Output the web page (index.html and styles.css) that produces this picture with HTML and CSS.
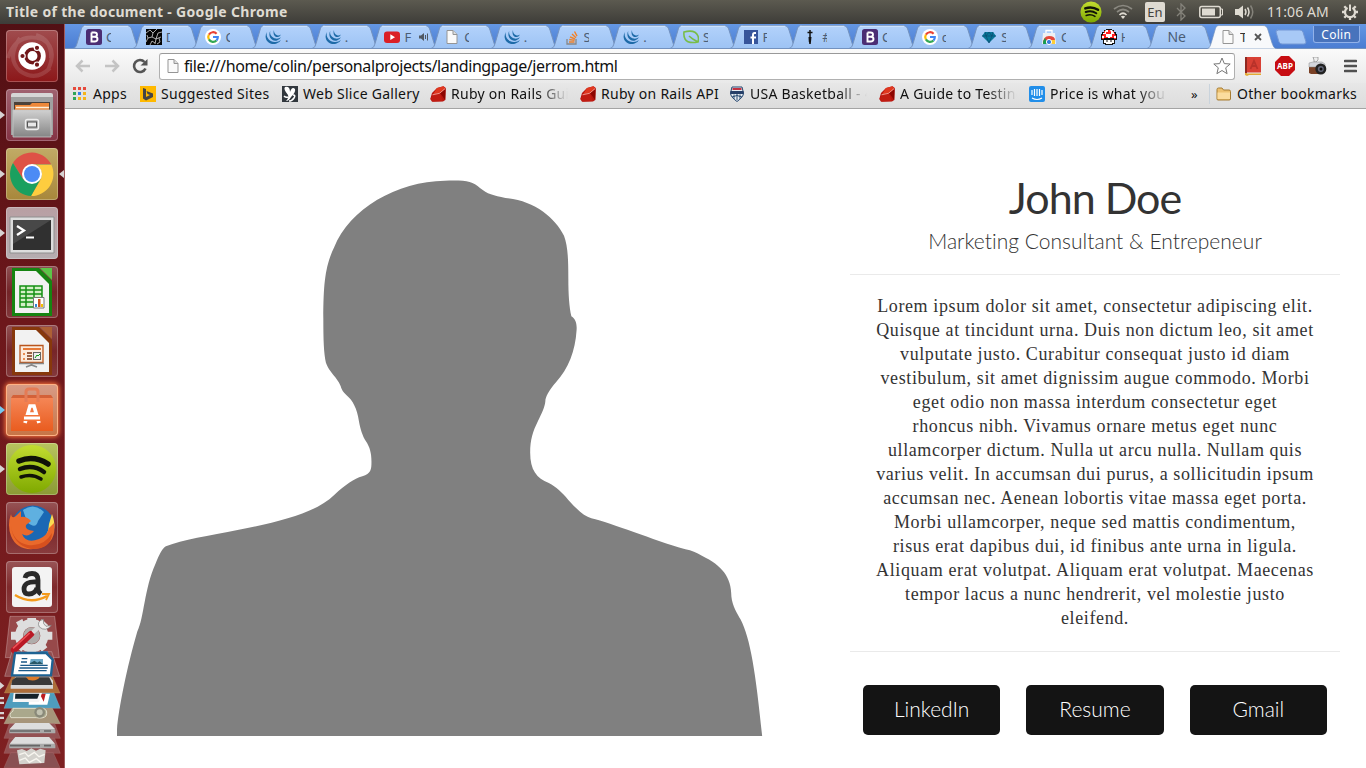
FILE: index.html
```html
<!DOCTYPE html>
<html lang="en">
<head>
<meta charset="utf-8">
<title>Title of the document</title>
<link rel="stylesheet" href="styles.css">
</head>
<body>
<svg class="defs" width="0" height="0">
  <defs>
    <linearGradient id="tabfill" x1="0" y1="0" x2="0" y2="1"><stop offset="0" stop-color="#b3d2fb"/><stop offset="1" stop-color="#9dc3f4"/></linearGradient>
    <linearGradient id="steel" x1="0" y1="0" x2="0" y2="1"><stop offset="0" stop-color="#d0d0d0"/><stop offset="1" stop-color="#858585"/></linearGradient>
    <linearGradient id="lime" x1="0" y1="0" x2="0" y2="1"><stop offset="0" stop-color="#c3dc31"/><stop offset="1" stop-color="#7fa900"/></linearGradient>
    <linearGradient id="bag" x1="0" y1="0" x2="0" y2="1"><stop offset="0" stop-color="#f58656"/><stop offset="1" stop-color="#e95c1f"/></linearGradient>
  </defs>
  <symbol id="tab" viewBox="0 0 70 25"><path d="M0 24.5C3 24 3.500 21 4.500 18L8 6C9 2.500 10 1.500 12.500 1.500H54C57 1.500 58 3 59 6L63 19C64.500 23 65 24 68 24.500Z" fill="url(#tabfill)" stroke="#7392bf"/><path d="M11 2.300H55" stroke="#d3e5fd"/></symbol>
  <symbol id="boot" viewBox="0 0 16 16"><rect width="16" height="16" rx="2.500" fill="#4b2d73"/><path d="M5.500 3.500H8.500Q11 3.500 11 5.700 11 7.500 8.500 7.700H5.500M8.500 7.700Q11.500 7.700 11.500 10 11.500 12.500 8.500 12.500H5.500V3.500" fill="none" stroke="#fff" stroke-width="1.900"/></symbol>
  <symbol id="goog" viewBox="0 0 16 16"><circle cx="8" cy="8" r="8" fill="#fff"/><g fill="none" stroke-width="2.200"><path d="M11.600 4.800A4.800 4.800 0 0 0 3.900 5.600" stroke="#ea4335"/><path d="M3.900 5.600A4.800 4.800 0 0 0 3.900 10.400" stroke="#fbbc05"/><path d="M3.900 10.400A4.800 4.800 0 0 0 11.500 11.400" stroke="#34a853"/><path d="M11.500 11.400A4.800 4.800 0 0 0 12.800 8H8" stroke="#4285f4"/></g></symbol>
  <symbol id="jq" viewBox="0 0 16 16"><g fill="#1e6ba8"><path d="M2 3C-2 9 3 16.500 11 14.800Q14.500 14 16 11Q13 13.500 9.500 13C4 12.500 .5 8 2 3Z"/><path d="M5.300 1.800C2.500 7 6.500 12.800 12 11.500Q14.500 11 16 8.300Q13.500 10 10.800 9.600C7 9 4.300 5.500 5.300 1.800Z"/><path d="M9 1C7.500 5 9.800 8.800 13 8Q15 7.500 16 5.500Q14 6.800 12.200 6.200C10 5.500 8.700 3.500 9 1Z"/></g></symbol>
  <symbol id="file" viewBox="0 0 16 16"><path d="M3 1.500H9L13 5.500V14.500H3Z" fill="#fafafa" stroke="#959595"/><path d="M9 1.500V5.500H13" fill="#ddd" stroke="#959595"/></symbol>
  <symbol id="ruby" viewBox="0 0 16 16"><path d="M2 7L7 2 13.500 .3 15.800 2 15.300 14 13 15.500 2 15.700 .3 13Z" fill="#b8130d"/><path d="M7 2L13.500 .3 15.300 2.500 10 7 3 8.500Z" fill="#e0371f"/><path d="M3 8.500L10 7.500 13 15 3 15.500 .5 13Z" fill="#c01c12"/><path d="M10 7L15.500 3 15.200 14Z" fill="#8c0500"/><path d="M2.500 8.800L9.500 7.300 15 2.700" stroke="#f9b0a4" fill="none" stroke-width=".8"/></symbol>
  <symbol id="folderic" viewBox="0 0 16 16"><path d="M1 3.500Q1 2 2.500 2H6L7.500 4H13Q14.500 4 14.500 5.500V13Q14.500 14 13 14H2Q1 14 1 13Z" fill="#edc171" stroke="#a77c32"/><path d="M1.500 6.500H14V13H1.500Z" fill="#fbdc9e"/></symbol>
  <symbol id="spot" viewBox="0 0 50 50"><circle cx="25" cy="25" r="24" fill="url(#lime)"/><g fill="none" stroke="#101208" stroke-linecap="round"><path d="M12 17Q27 11 41 20" stroke-width="5.500"/><path d="M13 25Q26 20 37 28" stroke-width="4.500"/><path d="M14 33Q25 29 34 35" stroke-width="3.500"/></g></symbol>
</svg>

<header class="panel">
  <div class="panel-title">Title of the document - Google Chrome</div>
  <div class="indicators">
    <svg width="24" height="24"><use href="#spot" x="1" y="1" width="22" height="22"/></svg>
    <svg class="wifi" width="20" height="16" viewBox="0 0 20 16"><g fill="none" stroke="#8b8981" stroke-width="1.700"><path d="M1 5Q10-2 19 5M4 8Q10 3 16 8"/><path d="M6.500 11Q10 7.500 13.500 11" stroke="#dfdbd2"/></g><path d="M7.800 12.500L10 15 12.200 12.500Q10 11 7.800 12.500" fill="#dfdbd2"/></svg>
    <span class="lang">En</span>
    <svg class="bt" width="10" height="18" viewBox="0 0 10 18"><path d="M1 5L9 13 5 17V1L9 5 1 13" fill="none" stroke="#85837b" stroke-width="1.300"/></svg>
    <svg class="batt" width="25" height="14" viewBox="0 0 25 14"><rect x=".8" y="1.500" width="20.500" height="11" rx="2" fill="none" stroke="#dfdbd2" stroke-width="1.500"/><path d="M3 3.500H16V10.500H3Z" fill="#dfdbd2"/><path d="M22 4H23.500V10H22" fill="none" stroke="#dfdbd2"/></svg>
    <svg class="vol" width="20" height="16" viewBox="0 0 20 16"><path d="M0 5H3.500L8 1.500V14.500L3.500 11H0Z" fill="#dfdbd2"/><path d="M10 5Q12 8 10 11M12.500 3.500Q15.500 8 12.500 12.500" fill="none" stroke="#dfdbd2" stroke-width="1.500"/><path d="M15.500 1.500Q20 8 15.500 14.500" fill="none" stroke="#85837b" stroke-width="1.500"/></svg>
    <span class="clock">11:06 AM</span>
    <svg class="gear" width="18" height="18" viewBox="0 0 18 18"><g stroke="#dfdbd2" fill="none"><path d="M6.500 4.800A5 5 0 1 0 11.500 4.800" stroke-width="2.200"/><path d="M9 1.500V8" stroke-width="2"/><path d="M1 9H4M14 9H17M3.300 14.700L5.200 12.800M14.700 14.700L12.800 12.800M9 14.500V17M3.300 3.300L5 5M14.700 3.300L13 5" stroke-width="2.300"/></g></svg>
  </div>
</header>

<div class="desktop">
  <nav class="launcher">
    <div class="tile dash"><svg viewBox="0 0 52 52"><g fill="none" stroke="#fff" stroke-opacity=".13" stroke-width="4"><path d="M2 28Q10 2 36 9Q52 18 42 40M14 8Q0 28 14 41Q30 52 44 38M30 5Q46 10 45 28"/></g><circle cx="26" cy="26" r="13.700" fill="#fff"/><circle cx="26.500" cy="26" r="6.700" fill="none" stroke="#701719" stroke-width="3.500"/><g fill="#701719" stroke="#fff" stroke-width="1.200"><circle cx="16.500" cy="26" r="2.700"/><circle cx="31" cy="17.800" r="2.700"/><circle cx="31" cy="34.700" r="2.700"/></g></svg></div>
    <div class="tile files run"><svg viewBox="0 0 52 52"><path d="M5 6Q5 4 7 4H45Q47 4 47 6V20H5Z" fill="#d6d6d6"/><path d="M5 8H47V46H5Z" fill="#a0a0a0"/><path d="M8 13H44V23H8Z" fill="#4c4139"/><path d="M9 16H24L26 14H43V24H9Z" fill="#ee8839"/><path d="M10 18.500H43" stroke="#fff0d9" stroke-width="1.500"/><path d="M7 21H45V48H7Z" fill="url(#steel)" stroke="#c7c7c7" stroke-width=".8"/><rect x="19.500" y="30.500" width="13" height="10" rx="2" fill="#aaa" stroke="#eee" stroke-width="1.400"/><rect x="21.500" y="33" width="9" height="5" fill="#e8e8e8" stroke="#555"/></svg></div>
    <div class="tile chrome run focused"><svg viewBox="0 0 52 52"><path d="M7 15A22 22 0 0 1 45 16H26L17 31Z" fill="#de5246"/><path d="M45 16A22 22 0 0 1 25 48L35 31Q38 23 31 17H45Z" fill="#fecd3f"/><path d="M25 48A22 22 0 0 1 7 15L17 31Q23 38 34 32Z" fill="#1aa05f"/><circle cx="26" cy="26" r="10" fill="#fff"/><circle cx="26" cy="26" r="8" fill="#4c8bf5"/></svg></div>
    <div class="tile term run"><svg viewBox="0 0 52 52"><path d="M4 10H48V46H4Z" fill="#ddd" stroke="#8f8f8f"/><path d="M7 13H45V43H7Z" fill="#303030"/><path d="M7 13H45L7 37Z" fill="#484848"/><path d="M11 19L18 23.500 11 28" fill="none" stroke="#fff" stroke-width="2.300"/><path d="M20 30.500H28" stroke="#fff" stroke-width="2"/></svg></div>
    <div class="tile"><svg viewBox="0 0 52 52"><path d="M6 2H33L46 15V50H6Z" fill="#168411"/><path d="M34 2H46V14Z" fill="#5cc548"/><path d="M9 5H30L43 18V47H9Z" fill="#f2f2f2"/><path d="M14 20H36V41H14Z" fill="#d4f0c7"/><path d="M14 20H36V41H14ZM14 24H36M14 28H36M14 32H36M14 36H36M20 20V41M28 20V41" fill="none" stroke="#159014" stroke-width="1.500"/><path d="M27.500 31.500H38V42H27.500Z" fill="#fff" stroke="#777"/><path d="M29 38H31V41H29Z" fill="#3586cf"/><path d="M32 33H34.500V41H32Z" fill="#d2551c"/><path d="M35 38H37V41H35Z" fill="#f5bf00"/></svg></div>
    <div class="tile"><svg viewBox="0 0 52 52"><path d="M6 2H33L46 15V50H6Z" fill="#87380c"/><path d="M34 2H46V14Z" fill="#ad6035"/><path d="M9 5H30L43 18V47H9Z" fill="#f2f2f2"/><path d="M14 20.500H37V37.500H14Z" fill="#fcebdc" stroke="#b9551d" stroke-width="1.300"/><path d="M17 24H35" stroke="#e67937" stroke-width="2"/><path d="M17 29H19M17 34H19" stroke="#e88b50" stroke-width="2.200"/><path d="M21 28H26M21 31H26M21 34H26" stroke="#7a3511" stroke-width="1.400"/><rect x="27.500" y="27.500" width="7" height="7" fill="#eee" stroke="#666"/><path d="M29 33L31 30 32 31 34 29" fill="none" stroke="#0b9a12"/><path d="M13 38.500H38M25.500 38V40L20 42M25.500 40L31 42" stroke="#888" stroke-width="1.700" fill="none"/></svg></div>
    <div class="tile store run blue"><svg viewBox="0 0 52 52"><path d="M5 14H47V47H5Z" fill="url(#bag)"/><path d="M7 11H45L47 14H5Z" fill="#d46138"/><path d="M20 18V8Q20 5 23 5H29Q32 5 32 8V18" fill="none" stroke="#e47b55" stroke-width="3"/><path d="M19 39L24 22H28L33 39M21 30H31" fill="none" stroke="#fff" stroke-width="3.600"/><path d="M17 34H35" stroke="#f37237" stroke-width="6"/><path d="M18 34H34" stroke="#fff" stroke-width="3"/></svg></div>
    <div class="tile spotify run"><svg viewBox="0 0 52 52"><use href="#spot" x="1" y="1" width="50" height="50"/></svg></div>
    <div class="tile"><svg viewBox="0 0 52 52"><circle cx="27" cy="25" r="21.500" fill="#1a68b4"/><path d="M17 8Q28 0 38 10L32 19Q30 28 21 20Z" fill="#5fb0e0"/><path d="M46 12Q52 28 43 35Q39 42 31 45Q43 34 43 22Z" fill="#fbdc51"/><path d="M5 12Q6 18 11 13L15 9 15 15Q20 14 25 19L20 23Q18 28 28 29Q22 36 16 32Q20 42 33 37Q41 34 43 26L48 21Q51 40 34 46Q12 51 5 34Q1 23 5 12Z" fill="#e9692b"/><path d="M5 24Q7 40 22 43Q38 45 46 31Q45 48 25 47Q7 43 5 24Z" fill="#d6501e"/></svg></div>
    <div class="tile"><svg viewBox="0 0 52 52"><rect x="6" y="6" width="40" height="40" rx="3" fill="#f3f3f3"/><path d="M19 17Q20 12.500 26 12.500Q32 12.500 32 19V28Q32 31 35 33M31 21Q18 20 18 28Q18 33 23 33Q29 33 31 27" fill="none" stroke="#292929" stroke-width="4.800"/><path d="M9 34Q25 44 41 35" fill="none" stroke="#f49a1b" stroke-width="2.300"/><path d="M36 33L43 33 40 39" fill="none" stroke="#f49a1b" stroke-width="1.800"/></svg></div>
    <svg class="stack" width="65" height="153" viewBox="0 360 195 459">
      <g stroke="#fff" stroke-opacity=".4" stroke-width="2">
        <path d="M30 364H164L178 488H16Z" fill="#97494a"/>
        <path d="M36 470H155L179 544H14Z" fill="#914c4e"/>
      </g>
      <g transform="translate(95 422)"><circle r="38" fill="none" stroke="#dedede" stroke-width="24"/><path d="M-13-53H13V-35H-13ZM-13 35H13V52H-13ZM-62-12H-40V12H-62ZM40-12H62V12H40ZM-47-40L-28-50-20-30-35-18ZM30-50L50-31 38-15 20-28ZM-47 35L-30 48-20 30-35 18ZM47 35L30 48 20 30 35 18Z" fill="#dedede"/><circle r="25" fill="#b0adab"/><path d="M-53 43L-2-5" stroke="#b91925" stroke-width="19" stroke-linecap="round"/><path d="M-56 38L-6-8" stroke="#ed5256" stroke-width="5"/><path d="M3-10L31-34" stroke="#dadada" stroke-width="13"/><path d="M35-49Q14-43 23-26Q42-10 59-31L43-28 36-36Z" fill="#eee" stroke="#777" stroke-width="2"/></g>
      <path d="M36 545H158L180 594H13Z" fill="#ac6d39" stroke="#c99861"/><path d="M38 557L47 545H150L159 557V581H32V572Z" fill="#d7d7d7"/><path d="M37 555L48 547H148L158 570H34Z" fill="#393939"/><path d="M77 545H119Q112 560 86 555Z" fill="#dc7b2a"/>
      <path d="M120 469H143L148 484H126Z" fill="#2879b7"/>
      <path d="M45 474H138L158 494 153 541H36Z" fill="#fff" stroke="#1d6292" stroke-width="7"/><path d="M65 491H82M63 501H81M61 511H143M58 519H143M55 527H140" stroke="#1b5988" stroke-width="4"/><path d="M92 492H129V508H89Z" fill="#6ca8c7"/><path d="M90 505L103 497 112 503 119 499 130 508H89Z" fill="#295867"/>
      <path d="M31 594H162L181 640H12Z" fill="#4e9dbd" stroke="#87bfd3"/><path d="M88 596H150L142 629H86Z" fill="#fff"/><path d="M119 596H137L131 620Z" fill="#bd1c20"/><path d="M41 594H126L117 621H38Z" fill="#f6f6f6"/><path d="M46 596H118L112 611H45Z" fill="#152128"/>
      <path d="M36 640H157L181 686H12Z" fill="#a7957a" stroke="#cabca8"/><path d="M39 640H130Q145 645 138 663Q129 672 109 668H33Q25 657 39 648Z" fill="#aaa88c" stroke="#dfddca" stroke-width="3"/><circle cx="119" cy="652" r="16" fill="#898979"/><circle cx="119" cy="652" r="9" fill="#c2c2b0"/>
      <path d="M28 686H164L181 730H12Z" fill="#935153" stroke="#b77979"/><path d="M46 684H147L166 705V715H28V704Z" fill="#aaa"/><path d="M46 684H147L165 702H29Z" fill="#ddd"/><path d="M30 708H120M132 708H153" stroke="#666" stroke-width="5"/>
      <path d="M28 730H164L181 775H12Z" fill="#935153" stroke="#b77979"/><path d="M46 726H147L166 749V760H28V749Z" fill="#aaa"/><path d="M46 726H147L165 746H29Z" fill="#ddd"/><path d="M30 752H120M132 752H153" stroke="#666" stroke-width="5"/>
      <path d="M32 773H160L180 818H12Z" fill="#895052" stroke="#b77979"/><path d="M51 766L66 762 80 768 94 760 108 767 121 761 137 766 133 804 58 808Z" fill="#d4d2cd"/><path d="M58 779L75 773 85 784 103 772 117 785 134 778M58 796L76 789 88 802 109 791 124 803" fill="none" stroke="#f8f6f0" stroke-width="4"/>
      <path d="M0 561L13 572 0 583ZM0 606H12V613H0ZM0 620H12V627H0ZM0 651H12V658H0ZM0 665H12V672H0Z" fill="#d8d4d4"/>
    </svg>
  </nav>

  <main class="browser">
    <div class="tabs">
      <div class="tab"><svg class="shape"><use href="#tab"/></svg><svg class="ico"><use href="#boot"/></svg><span class="half">C</span></div>
      <div class="tab"><svg class="shape"><use href="#tab"/></svg><svg class="ico" viewBox="0 0 16 16"><path d="M0 0H16V16H0Z" fill="#050505"/><path d="M0 4L4 1 7 4 11 0M7 4L6 8 2 9 0 13M6 8L10 10 9 15M10 10L15 8M10 10L12 4 16 3M2 9L1 6M4 16L6 12 9 14M13 9L14 13 11 15" fill="none" stroke="#d4d4d4" stroke-width=".8"/></svg><span class="half d">D</span></div>
      <div class="tab"><svg class="shape"><use href="#tab"/></svg><svg class="ico"><use href="#goog"/></svg><span class="half">C</span></div>
      <div class="tab"><svg class="shape"><use href="#tab"/></svg><svg class="ico"><use href="#jq"/></svg><span>.</span></div>
      <div class="tab"><svg class="shape"><use href="#tab"/></svg><svg class="ico"><use href="#jq"/></svg><span>.</span></div>
      <div class="tab"><svg class="shape"><use href="#tab"/></svg><svg class="ico" viewBox="0 0 16 16"><rect y="2.500" width="16" height="11.500" rx="3" fill="#db1f26"/><path d="M6.300 5.300L11 8.200 6.300 11Z" fill="#fff"/></svg><span>F</span><svg class="sound" width="10" height="10" viewBox="0 0 10 10"><path d="M0 3.500H2L5 1V9L2 6.500H0Z" fill="#505863"/><path d="M6.500 3V7M8.500 1.500V8.500" stroke="#505863" stroke-width="1"/></svg></div>
      <div class="tab"><svg class="shape"><use href="#tab"/></svg><svg class="ico"><use href="#file"/></svg><span class="half">C</span></div>
      <div class="tab"><svg class="shape"><use href="#tab"/></svg><svg class="ico"><use href="#jq"/></svg><span>.</span></div>
      <div class="tab"><svg class="shape"><use href="#tab"/></svg><svg class="ico" viewBox="0 0 16 16"><path d="M3 10V15H12V10" fill="none" stroke="#888" stroke-width="1.300"/><path d="M5 13H10.500M5.200 10.500L10.600 11.400M6 7.800L11 10M8 5L12 8.700M10.500 2.500L13 7.200" stroke="#f48024" stroke-width="1.400"/></svg><span class="half">S</span></div>
      <div class="tab"><svg class="shape"><use href="#tab"/></svg><svg class="ico"><use href="#jq"/></svg><span>.</span></div>
      <div class="tab"><svg class="shape"><use href="#tab"/></svg><svg class="ico" viewBox="0 0 16 16"><path d="M1 3Q12 0 15 7Q16 10 15 13Q5 15 2 10Q.5 7 1 3ZM6 7Q9 10 15 13" fill="none" stroke="#78bd48" stroke-width="1.600"/></svg><span class="half">S</span></div>
      <div class="tab"><svg class="shape"><use href="#tab"/></svg><svg class="ico" viewBox="0 0 16 16"><path d="M1 1H15V15H1Z" fill="#37559b"/><path d="M13 4H11.500Q10 4 10 6V15M7.500 8.500H13" fill="none" stroke="#fff" stroke-width="2"/></svg><span class="half d">F</span></div>
      <div class="tab"><svg class="shape"><use href="#tab"/></svg><svg class="ico" viewBox="0 0 16 16"><path d="M8 1V15M5.500 3.500H10.500" stroke="#111" stroke-width="1.500"/><path d="M6.500 8H9.500L9 12.500 8 15 6.800 12.500Z" fill="#111"/></svg><span class="half">#</span></div>
      <div class="tab"><svg class="shape"><use href="#tab"/></svg><svg class="ico"><use href="#boot"/></svg><span class="half">C</span></div>
      <div class="tab"><svg class="shape"><use href="#tab"/></svg><svg class="ico"><use href="#goog"/></svg><span class="half c">c</span></div>
      <div class="tab"><svg class="shape"><use href="#tab"/></svg><svg class="ico" viewBox="0 0 16 16"><path d="M4 3H12L15 7 8 14 1 7Z" fill="#087798"/><path d="M4 3L5 7 8 3 11 7 12 3M1 7H15M5 7L8 14 11 7" stroke="#0b4b70" stroke-width=".7" fill="none"/></svg><span class="half">S</span></div>
      <div class="tab"><svg class="shape"><use href="#tab"/></svg><svg class="ico" viewBox="0 0 16 16"><path d="M2 4H14L15 15H1Z" fill="#eef0f2"/><path d="M5 4V1.500H11V4" fill="none" stroke="#fff" stroke-width="1.300"/><path d="M2 15Q2 7 8 7Q14 7 14 11H8Z" fill="#e4473b"/><path d="M2 15Q2 11 4 9L7 15Z" fill="#179c50"/><path d="M9 11H14V15H9Z" fill="#ffcd37"/><circle cx="8" cy="13" r="2.600" fill="#367bdd" stroke="#fff"/></svg><span class="half">C</span></div>
      <div class="tab"><svg class="shape"><use href="#tab"/></svg><svg class="ico" viewBox="0 0 16 16"><path d="M5 0H11V1H13V3H15V5H16V11H14V15H12V16H4V15H2V11H0V5H1V3H3V1H5Z" fill="#111"/><path d="M5 1H11V2H13V4H14V6H15V10H13V9H3V10H1V6H2V4H3V2H5Z" fill="#f22"/><path d="M5 1H7V3H5V5H2V4H4V2ZM9 1H11L13 4V5H10V3ZM5 5H11V8H9V9H7V8H5ZM1 7H3V9H1ZM13 7H15V9H13ZM3 11H13V14H11V15H5V14H3Z" fill="#fff"/><path d="M6 11V13M10 11V13" stroke="#111"/></svg><span class="half d">H</span></div>
      <div class="tab plain"><svg class="shape"><use href="#tab"/></svg><span>Ne</span></div>
      <div class="tab active"><svg class="shape" viewBox="0 0 70 25"><path d="M0 25C3 24 3.500 21 4.500 18L8 6C9 2.500 10 1.500 12.500 1.500H56C59 1.500 60 3 61 6L65 19C66.500 23 67 24 70 25Z" fill="#f8f9fb" stroke="#7392bf" stroke-width=".7"/></svg><svg class="ico"><use href="#file"/></svg><span class="half">T</span><svg class="close" width="8" height="8" viewBox="0 0 8 8"><path d="M1 1L7 7M7 1L1 7" stroke="#555" stroke-width="1.800"/></svg></div>
      <svg class="newtab" width="32" height="16" viewBox="0 0 32 16"><path d="M2 1H25Q27 1 28 3L31 13Q31 15 29 15H7Q5 15 4 13L1 3Q1 1 3 1Z" fill="#a8c9f6" stroke="#7498d5"/></svg>
      <div class="user">Colin</div>
    </div>

    <div class="toolbar">
      <svg class="nav" width="16" height="14" viewBox="0 0 16 14"><path d="M15 7H2M7.500 1.500L2 7 7.500 12.500" fill="none" stroke="#c4c4c4" stroke-width="2.500"/></svg>
      <svg class="nav" width="16" height="14" viewBox="0 0 16 14"><path d="M1 7H14M8.500 1.500L14 7 8.500 12.500" fill="none" stroke="#c4c4c4" stroke-width="2.500"/></svg>
      <svg class="reload" width="16" height="16" viewBox="0 0 16 16"><path d="M12.500 4A6 6 0 1 0 13.500 10.500" fill="none" stroke="#555" stroke-width="2.600"/><path d="M15.500 1V7.500H8.500Z" fill="#555"/></svg>
      <div class="omnibox"><svg width="16" height="18"><use href="#file"/></svg><span>file:///home/colin/personalprojects/landingpage/jerrom.html</span><svg class="star" width="18" height="18" viewBox="0 0 18 18"><path d="M9 1L11.300 6.600 17.200 7 12.700 10.800 14.100 16.700 9 13.500 3.900 16.700 5.300 10.800 .8 7 6.700 6.600Z" fill="#fff" stroke="#777"/></svg></div>
      <svg class="ext" width="17" height="19" viewBox="0 0 17 19"><path d="M1 0H17V16H1Z" fill="#d84034"/><path d="M1 0H3V18H1Z" fill="#8f2820"/><path d="M1 16H17V18H5L3 19 1 18Z" fill="#e3aa35"/><path d="M3 16H17" stroke="#eee"/><path d="M6.500 12L10 4 13.500 12M7.500 9H12.500" stroke="#b8322a" stroke-width="1.800" fill="none"/></svg>
      <div class="abp">ABP</div>
      <svg class="cam" width="19" height="19" viewBox="0 0 19 19"><path d="M5 0H10V3L8 5H6V3Z" fill="#eee" stroke="#888" stroke-width=".7"/><path d="M1 7H15V17H3L1 16Z" fill="#7a4126"/><path d="M1 6L5 5H14L17 7V10H1Z" fill="#d4d6dc" stroke="#888" stroke-width=".5"/><circle cx="12.800" cy="12" r="5.500" fill="#232323"/><circle cx="12.800" cy="12" r="3" fill="#65697a"/><circle cx="13" cy="12" r="1.500" fill="#111"/></svg>
      <svg class="menu" width="13" height="14" viewBox="0 0 13 14"><path d="M1 2H12M1 7H12M1 12H12" stroke="#505050" stroke-width="2.700" stroke-linecap="round"/></svg>
    </div>

    <div class="bookmarks">
      <div class="bm w68"><svg class="ico" viewBox="0 0 16 16"><path d="M1 1H4V4H1ZM6 1H9V4H6ZM11 1H14V4H11Z" fill="#e64a3c"/><path d="M1 6H4V9H1Z" fill="#2da456"/><path d="M6 6H9V9H6Z" fill="#347ee8"/><path d="M11 6H14V9H11ZM6 11H9V14H6ZM11 11H14V14H11Z" fill="#f4b41a"/><path d="M1 11H4V14H1Z" fill="#2da456"/></svg><span>Apps</span></div>
      <div class="bm w142"><svg class="ico" viewBox="0 0 16 16"><path d="M0 0H16V16H0Z" fill="#ffb900"/><path d="M3 2L6 3V11L10 9 7.500 8 6.500 5 13 7.500V11L6 14.500 3 12.500Z" fill="#454545"/></svg><span>Suggested Sites</span></div>
      <div class="bm w148"><svg class="ico" viewBox="0 0 16 16"><path d="M0 0H16V16H0Z" fill="#31373d"/><path d="M3 1Q8 0 8 6Q10 0 13 3Q14 6 9 11Q7 15 4 15Q7 12 6 9Q1 3 3 1Z" fill="#fff"/><path d="M2 10Q4 12 6 11M11 9Q14 9 12 12Q10 15 7 15" fill="none" stroke="#fff" stroke-width="1.500"/></svg><span>Web Slice Gallery</span></div>
      <div class="bm w150"><svg class="ico"><use href="#ruby"/></svg><span class="fade">Ruby on Rails Guides</span></div>
      <div class="bm w149"><svg class="ico"><use href="#ruby"/></svg><span>Ruby on Rails API</span></div>
      <div class="bm w150 usa"><svg class="ico" viewBox="0 0 16 16"><path d="M3 1H13L14.500 7Q14.500 11 8 15.500Q1.500 11 1.500 7Z" fill="#e8edf2" stroke="#24456e"/><path d="M1.500 5H14.500V8H1.500Z" fill="#263f68"/><path d="M3.500 3H12.500" stroke="#c23242" stroke-width="2"/><path d="M3 11Q8 8 13 11M8 8V14M5 8.500V13M11 8.500V13" stroke="#2b4c72" stroke-width="1" fill="none"/></svg><span class="fade">USA Basketball - 404</span></div>
      <div class="bm w150"><svg class="ico"><use href="#ruby"/></svg><span class="fade">A Guide to Testing R</span></div>
      <div class="bm w150 price"><svg class="ico" viewBox="0 0 16 16"><rect width="16" height="16" rx="2" fill="#218ee9"/><path d="M3 4V9M5.500 3V10M8 3V10M10.500 3V10M13 4V9M3 12Q8 15 13 12" stroke="#fff" stroke-width="1.200" fill="none"/></svg><span class="fade">Price is what you pay</span></div>
      <div class="more">»</div>
      <div class="bm other"><svg class="ico"><use href="#folderic"/></svg><span>Other bookmarks</span></div>
    </div>

    <div class="page">
      <svg class="portrait" width="646" height="557" viewBox="39.200 52.300 1489.700 1455" preserveAspectRatio="none"><path d="M39 1505V1490C42 1440 62 1325 86 1232C102 1195 102 1120 128 1055C137 1028 145 1013 152 1009C190 992 250 982 320 966C420 944 500 920 540 875C568 846 585 833 605 826C625 819 626 808 626 788C626 765 622 750 614 736C605 722 600 700 597 682C593 650 583 628 568 614C552 597 560 595 547 575C535 555 527 550 521 530C516 505 515 470 515 415C515 320 520 275 540 228C575 128 685 55 795 54C845 53 857 54 877 74C892 88 908 94 935 99C1000 105 1050 150 1070 198C1079 225 1080 260 1080 310C1080 350 1082 385 1087 408C1098 416 1100 430 1099 445C1096 500 1080 545 1052 580C1035 602 1027 620 1027 630C1026 645 1018 663 1010 682C998 710 992 730 992 765C992 810 1007 832 1035 844C1052 854 1065 868 1080 888C1100 913 1117 931 1133 936C1180 948 1275 993 1350 1017C1365 1020 1375 1026 1388 1034C1435 1060 1456 1090 1456 1140C1458 1165 1470 1185 1477 1200C1500 1250 1512 1340 1527 1505Z" fill="#808080"/></svg>
      <section class="bio">
        <h1>John Doe</h1>
        <h2>Marketing Consultant &amp; Entrepeneur</h2>
        <hr>
        <p>Lorem ipsum dolor sit amet, consectetur adipiscing elit.<br>Quisque at tincidunt urna. Duis non dictum leo, sit amet<br>vulputate justo. Curabitur consequat justo id diam<br>vestibulum, sit amet dignissim augue commodo. Morbi<br>eget odio non massa interdum consectetur eget<br>rhoncus nibh. Vivamus ornare metus eget nunc<br>ullamcorper dictum. Nulla ut arcu nulla. Nullam quis<br>varius velit. In accumsan dui purus, a sollicitudin ipsum<br>accumsan nec. Aenean lobortis vitae massa eget porta.<br>Morbi ullamcorper, neque sed mattis condimentum,<br>risus erat dapibus dui, id finibus ante urna in ligula.<br>Aliquam erat volutpat. Aliquam erat volutpat. Maecenas<br>tempor lacus a nunc hendrerit, vel molestie justo<br>eleifend.</p>
        <hr>
        <div class="links"><a>LinkedIn</a><a>Resume</a><a>Gmail</a></div>
      </section>
    </div>
  </main>
</div>
</body>
</html>
```
FILE: styles.css
```css
* { box-sizing: border-box; }
body { margin: 0; width: 1366px; height: 768px; overflow: hidden; background: #fff; font-family: "Noto Sans", "Open Sans", sans-serif; }
svg { display: block; flex: none; }
.defs { position: absolute; }

.panel { height: 24px; display: flex; justify-content: space-between; align-items: center; padding-left: 6px; background: linear-gradient(#5c5a50, #3d3c38); color: #dfdbd2; }
.panel-title { font-size: 14px; font-weight: 700; line-height: 24px; white-space: nowrap; letter-spacing: .32px; }
.indicators { display: flex; align-items: center; width: 287px; height: 24px; }
.wifi { margin-left: 10px; }
.lang { margin-left: 12px; width: 20px; height: 20px; border-radius: 2px; background: #dfdbd2; color: #44433e; font-size: 13px; line-height: 21px; text-align: center; }
.bt { margin-left: 11px; }
.batt { margin-left: 13px; }
.vol { margin-left: 11px; }
.clock { margin-left: 12px; width: 66px; font-size: 14px; line-height: 24px; white-space: nowrap; letter-spacing: .1px; }
.gear { margin-left: 8px; }

.desktop { display: flex; height: 744px; }
.launcher { width: 65px; flex: none; padding-top: 6px; display: flex; flex-direction: column; gap: 7px; background: linear-gradient(#521014, #6d171b 40%, #7e2021); border-right: 1px solid #a05a5c; }
.tile { position: relative; width: 52px; height: 52px; flex: none; margin-left: 6px; border-radius: 4px; background: linear-gradient(rgba(255,255,255,.25), rgba(255,255,255,.06) 50%, rgba(255,255,255,.14)); box-shadow: inset 0 0 0 1px rgba(255,255,255,.25); }
.tile svg { width: 52px; height: 52px; }
.dash { background: linear-gradient(#a04c4e, #8c1719); }
.files { background: linear-gradient(#a06270, #843344); }
.chrome { background: linear-gradient(#c1ab66, #a8873b); }
.term { background: linear-gradient(#b99fa3, #b5adb0); }
.store { background: linear-gradient(#d89c87, #c77445); box-shadow: 0 0 5px 1px #ff793f, inset 0 0 0 1px #ffb285; }
.spotify { background: linear-gradient(#b8c45e, #8b9b35); }
.run::before { content: ""; position: absolute; left: -6px; top: 22px; border: 4px solid transparent; border-left: 5px solid #d7d3d3; border-right: 0; }
.blue::before { border-left-color: #76c9ef; }
.focused::after { content: ""; position: absolute; right: -6px; top: 22px; border: 4px solid transparent; border-right: 5px solid #d7d3d3; border-left: 0; }
.stack { margin-top: -5px; }

.browser { flex: 1; min-width: 0; display: flex; flex-direction: column; }
.tabs { height: 25px; flex: none; display: flex; padding-left: 8px; background: linear-gradient(#6497e4, #4b7dd2); border-bottom: 1px solid #7392bf; }
.tab { position: relative; width: 59.7px; height: 25px; flex: none; display: flex; align-items: center; padding-left: 13px; color: #4b5d75; font-size: 13px; }
.shape { position: absolute; left: 0; top: 0; width: 70px; height: 25px; }
.tab .ico, .tab span, .tab .close, .tab .sound { position: relative; }
.ico { width: 16px; height: 16px; }
.tab span { margin-left: 4px; line-height: 20px; }
.half { width: 5px; overflow: hidden; }
.half.d, .half.c { width: 4px; }
.sound { margin-left: 8px; }
.plain { padding-left: 16px; font-size: 14px; }
.active { color: #333; }
.close { margin-left: 9px; }
.newtab { margin: 5px 0 0 8px; }
.user { margin: 2px 0 0 6px; width: 47px; height: 17px; flex: none; border: 1px solid #91b1e9; border-top: 0; border-radius: 0 0 3px 3px; background: #4873bc; color: #fff; font-size: 12px; line-height: 18px; letter-spacing: .3px; text-align: center; }

.toolbar { height: 34px; flex: none; display: flex; align-items: center; padding-left: 10px; background: linear-gradient(#fafafa, #e9e9e9); }
.nav { margin-right: 13px; }
.reload { margin-left: -1px; }
.omnibox { margin-left: 11px; width: 1076px; height: 27px; display: flex; align-items: center; padding: 0 3px 0 5px; background: #fff; border: 1px solid #b0b0b0; border-top-color: #999; border-radius: 3px; font-size: 16px; color: #111; }
.omnibox span { margin-left: 3px; white-space: nowrap; letter-spacing: -.41px; }
.star { margin-left: auto; }
.ext { margin-left: 9px; }
.abp { margin-left: 14px; width: 20px; height: 20px; background: #c70d12; clip-path: polygon(30% 0, 70% 0, 100% 30%, 100% 70%, 70% 100%, 30% 100%, 0 70%, 0 30%); color: #fff; font-size: 8px; font-weight: 700; line-height: 20px; text-align: center; }
.cam { margin-left: 13px; }
.menu { margin-left: 17px; }

.bookmarks { height: 26px; flex: none; display: flex; align-items: center; padding: 0 0 4px 7px; background: linear-gradient(#e7e7e7, #dcdcdc); border-bottom: 1px solid #a4a4a4; color: #111; font-size: 14px; line-height: 20px; letter-spacing: .27px; }
.bm { display: flex; align-items: center; flex: none; white-space: nowrap; }
.bm span { margin-left: 5px; }
.w68 { width: 68px; } .w142 { width: 142px; } .w148 { width: 148px; } .w149 { width: 149px; } .w150 { width: 150px; }
.fade { width: 117px; overflow: hidden; -webkit-mask-image: linear-gradient(90deg, #000 75%, transparent); mask-image: linear-gradient(90deg, #000 75%, transparent); }
.more { margin-left: 12px; width: 18px; font-size: 13px; }
.other { border-left: 1px solid #c9d3dc; padding-left: 6px; }

.page { flex: 1; display: flex; background: #fff; color: #333; }
.portrait { margin: 71px 0 0 52px; }
.bio { width: 490px; margin-left: 87px; padding-top: 63px; text-align: center; font-family: Lato, sans-serif; font-variant-ligatures: none; }
h1 { margin: 0; font-size: 43px; line-height: 52px; font-weight: 400; letter-spacing: -1px; }
h2 { margin: 3px 0 0; font-size: 21px; line-height: 27px; font-weight: 300; letter-spacing: .02px; }
hr { margin: 20px 0 0; height: 1px; border: 0; background: #eaeaea; }
.bio p { margin: 19px 0 0; font-family: "Liberation Serif", serif; font-size: 18px; line-height: 24px; letter-spacing: .61px; white-space: nowrap; }
.bio p + hr { margin-top: 21px; }
.links { display: flex; gap: 26px; padding: 33px 13px 0; }
.links a { flex: 1; height: 50px; border-radius: 5px; background: #141414; color: #fff; font-size: 21px; font-weight: 300; line-height: 47px; }
```
